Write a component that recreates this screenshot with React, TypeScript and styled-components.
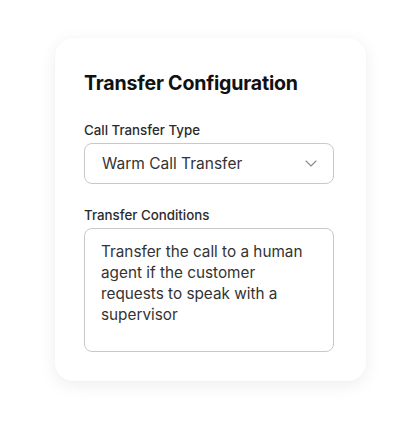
import React from 'react'
import styled, { createGlobalStyle } from 'styled-components'

const GlobalStyle = createGlobalStyle`
  html, body {
    margin: 0;
    padding: 0;
    background: #ffffff;
  }
  body {
    font-family: Inter, "Noto Sans", sans-serif;
    -webkit-font-smoothing: antialiased;
  }
`

const Page = styled.main`
  width: 420px;
  height: 421px;
  box-sizing: border-box;
  padding: 38px 54px 0 55px;
`

const Card = styled.section`
  box-sizing: border-box;
  width: 311px;
  height: 343px;
  background: #ffffff;
  border-radius: 18px;
  box-shadow: 0 4px 18px rgba(0, 0, 0, 0.07), 0 0 2px rgba(0, 0, 0, 0.03);
  padding: 33px 32px 0 29px;
  display: flex;
  flex-direction: column;
`

const Title = styled.h2`
  margin: 0 0 27px;
  font-size: 19.6px;
  font-weight: 700;
  letter-spacing: -0.2px;
  color: #111111;
  line-height: 24px;
`

const Field = styled.div`
  display: flex;
  flex-direction: column;
  gap: 5px;
  margin-bottom: ${({ $gap }: { $gap?: number }) => $gap ?? 0}px;
`

const Label = styled.label`
  font-size: 13.3px;
  font-weight: 500;
  color: #2b2b2b;
  line-height: 16px;
`

const Select = styled.div`
  box-sizing: border-box;
  height: 41px;
  border: 1px solid #c9c9c9;
  border-radius: 8px;
  display: flex;
  align-items: center;
  justify-content: space-between;
  padding: 0 16px 0 17px;
  font-size: 15.5px;
  color: #333333;
`

const TextArea = styled.div`
  box-sizing: border-box;
  height: 124px;
  border: 1px solid #c9c9c9;
  border-radius: 8px;
  padding: 12px 16px 0 16px;
  font-size: 15.3px;
  line-height: 21px;
  color: #333333;
`

const Chevron = () => (
  <svg width="12" height="7" viewBox="0 0 12 7" fill="none">
    <path d="M1 1l5 5 5-5" stroke="#8a8a8a" strokeWidth="1.1" strokeLinecap="round" strokeLinejoin="round" />
  </svg>
)

export default function App() {
  return (
    <Page>
      <GlobalStyle />
      <Card>
        <Title>Transfer Configuration</Title>
        <Field $gap={23}>
          <Label>Call Transfer Type</Label>
          <Select>
            <span>Warm Call Transfer</span>
            <Chevron />
          </Select>
        </Field>
        <Field>
          <Label>Transfer Conditions</Label>
          <TextArea>
            Transfer the call to a human agent if the customer requests to speak with a supervisor
          </TextArea>
        </Field>
      </Card>
    </Page>
  )
}
